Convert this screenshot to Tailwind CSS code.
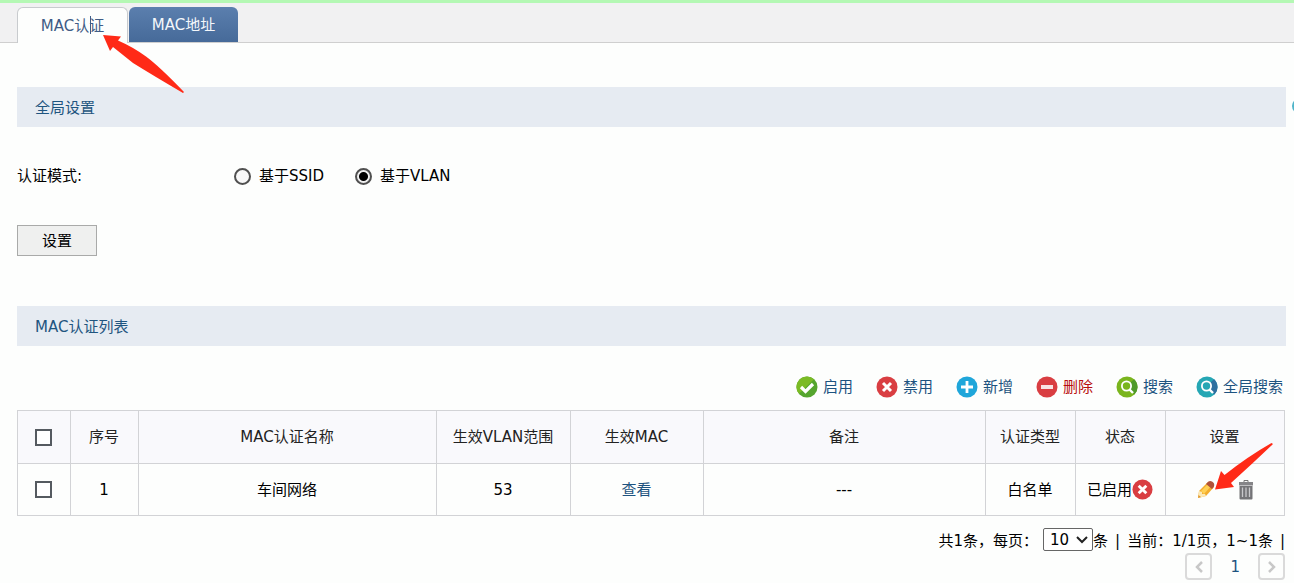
<!DOCTYPE html>
<html lang="zh-CN">
<head>
  <meta charset="UTF-8" />
  <meta name="viewport" content="width=device-width, initial-scale=1.0" />
  <title>MAC认证</title>
  <script src="https://cdn.jsdelivr.net/npm/@tailwindcss/browser@4"></script>
</head>
<body class="relative overflow-x-hidden bg-[#fdfefd] font-['DejaVu_Sans','Noto_Sans_CJK_SC',sans-serif] text-[15px] leading-5 text-black">
  <!-- Tabs -->
  <header class="border-t-3 border-[#b4f8b4]">
    <nav class="flex h-10 items-end gap-px border-b border-[#cfcfcf] bg-[#f1f1f2] pl-[17px]">
      <a href="#auth" class="relative -mb-px flex h-9 w-[111px] items-center justify-center rounded-t-md border border-b-0 border-[#c8cbce] bg-[#fdfefd] text-[#3f5c85]">MAC认证<span class="absolute top-2 left-[72px] h-[18px] w-px bg-[#3f5c85]"></span></a>
      <a href="#address" class="flex h-[35px] w-[109px] items-center justify-center rounded-t-md bg-linear-to-b from-[#5b7fae] to-[#466a99] text-[#f4f7fb]">MAC地址</a>
    </nav>
  </header>

  <main class="pt-11 pr-2 pl-[17px]">
    <!-- Global settings -->
    <h2 class="flex h-10 items-center bg-[#e6ebf2] pt-px pl-[18px] text-[#1f5580]">全局设置</h2>
    <form>
      <fieldset class="mt-[39px] flex items-center">
        <legend class="float-left w-[217px]">认证模式:</legend>
        <label class="flex w-[121px] items-center gap-2">
          <input type="radio" name="mode" class="size-[17px] appearance-none rounded-full border-2 border-[#505050] bg-[#f8f8f8]" />基于SSID
        </label>
        <label class="flex items-center gap-2">
          <input type="radio" name="mode" checked class="size-[17px] appearance-none rounded-full border-2 border-[#505050] bg-[#f8f8f8] checked:bg-[radial-gradient(circle,#000_4px,#f0f0f0_5px)]" />基于VLAN
        </label>
      </fieldset>
      <button type="button" class="mt-[39px] block h-[31px] w-20 border border-[#a9aaa9] bg-[#eff0ef] pt-px">设置</button>
    </form>

    <!-- List -->
    <h2 class="mt-[50px] flex h-10 items-center bg-[#e6ebf2] pt-px pl-[18px] text-[#1f5580]">MAC认证列表</h2>
    <div class="mt-[30px] mr-[3px] flex items-center justify-end gap-[23px] text-[#1d5380]">
      <button type="button" class="flex items-center gap-[5px]">
        <svg class="size-[22px]" viewBox="0 0 22 22"><circle cx="11" cy="11" r="10.5" fill="#55a52e"/><path d="M11 .5a10.500 10.500 0 0 0-8 17.300L18 3.200A10.500 10.500 0 0 0 11 .5" fill="#7bbb25"/><path d="M5 11l4.500 4.500L17 8" fill="none" stroke="#fff" stroke-width="3.200"/></svg>启用
      </button>
      <button type="button" class="flex items-center gap-[5px]">
        <svg class="size-[22px]" viewBox="0 0 22 22"><circle cx="11" cy="11" r="10.500" fill="#d93e42"/><path d="M7 7l8 8M15 7l-8 8" stroke="#fff" stroke-width="3"/></svg>禁用
      </button>
      <button type="button" class="flex items-center gap-[5px]">
        <svg class="size-[22px]" viewBox="0 0 22 22"><circle cx="11" cy="11" r="10.500" fill="#1fa6da"/><path d="M11 5v12M5 11h12" stroke="#fff" stroke-width="2.800"/></svg>新增
      </button>
      <button type="button" class="flex items-center gap-[5px] text-[#b80d0d]">
        <svg class="size-[22px]" viewBox="0 0 22 22"><circle cx="11" cy="11" r="10.500" fill="#d93e42"/><path d="M5 11h12" stroke="#f8e4e4" stroke-width="4"/></svg>删除
      </button>
      <button type="button" class="flex items-center gap-[5px]">
        <svg class="size-[22px]" viewBox="0 0 22 22"><circle cx="11" cy="11" r="10.500" fill="#7ab51d"/><path d="M15 15l3.500 3.500A10.500 10.500 0 0 0 18 3.200L14 7z" fill="#4f9a2a"/><circle cx="10.500" cy="10" r="4.600" fill="none" stroke="#fff" stroke-width="1.800"/><path d="M13.500 13.500l3.500 3.500" stroke="#fff" stroke-width="2.400"/></svg>搜索
      </button>
      <button type="button" class="flex items-center gap-[5px]">
        <svg class="size-[22px]" viewBox="0 0 22 22"><circle cx="11" cy="11" r="10.500" fill="#25a7b4"/><path d="M15 15l3.500 3.500A10.500 10.500 0 0 0 18 3.200L14 7z" fill="#2f6f9f"/><circle cx="10.500" cy="10" r="4.600" fill="none" stroke="#fff" stroke-width="1.800"/><path d="M13.500 13.500l3.500 3.500" stroke="#fff" stroke-width="2.400"/></svg>全局搜索
      </button>
    </div>

    <div class="relative mt-3 mr-px">
      <table class="w-full table-fixed border-collapse text-center [&_td]:border [&_td]:border-[#d2d3d6] [&_td]:pr-px [&_th]:border [&_th]:border-[#d2d3d6] [&_th]:pr-px [&_th]:font-normal">
        <colgroup>
          <col class="w-[53px]" /><col class="w-[68px]" /><col class="w-[298px]" /><col class="w-[134px]" /><col class="w-[133px]" /><col /><col class="w-[90px]" /><col class="w-[90px]" /><col class="w-[119px]" />
        </colgroup>
        <thead class="bg-[#f9f9fc] text-[#222]">
          <tr class="h-[53px]">
            <th><input type="checkbox" aria-label="全选" class="block mx-auto size-[17px] appearance-none border-2 border-[#555a60] bg-white" /></th>
            <th>序号</th>
            <th>MAC认证名称</th>
            <th>生效VLAN范围</th>
            <th>生效MAC</th>
            <th>备注</th>
            <th>认证类型</th>
            <th>状态</th>
            <th>设置</th>
          </tr>
        </thead>
        <tbody>
          <tr class="h-[52px]">
            <td><input type="checkbox" aria-label="选择1" class="block mx-auto size-[17px] appearance-none border-2 border-[#555a60] bg-white" /></td>
            <td>1</td>
            <td>车间网络</td>
            <td>53</td>
            <td><a href="#view" class="text-[#1d5380]">查看</a></td>
            <td>---</td>
            <td>白名单</td>
            <td>
              <div class="flex items-center justify-center">已启用<button type="button" aria-label="禁用"><svg class="block size-[21px]" viewBox="0 0 22 22"><circle cx="11" cy="11" r="10.500" fill="#d93e42"/><path d="M7 7l8 8M15 7l-8 8" stroke="#fff" stroke-width="3"/></svg></button></div>
            </td>
            <td>
              <div class="flex items-center justify-center gap-5 pl-0.5">
                <button type="button" aria-label="编辑"><svg class="block size-5" viewBox="0 0 20 20"><path d="M2 18l1-7 9-9 6 5-8 9z" fill="#f3ad2c"/><path d="M5 11l8-8 3 2-8 9z" fill="#ffd054"/><path d="M2 18l1-7 3 1v2l3 0 1 2z" fill="#fbe9b8"/><path d="M2 18l.500-3 2.500 2z" fill="#e0962a"/><path d="M11 3q2-3 5-1.500t2 5l-2 2.500-6-5z" fill="#b0523a"/></svg></button>
                <button type="button" aria-label="删除"><svg class="block size-5" viewBox="0 0 20 20"><path d="M8 2V.500h4V2" fill="none" stroke="#777" stroke-width="1"/><path d="M3 2h14v3.500H3z" fill="#858588"/><path d="M3.500 6h13v12.500q0 1-1 1h-11q-1 0-1-1z" fill="#747477"/><path d="M6.500 7.500v9.500M10 7.500v9.500M13.500 7.500v9.500" stroke="#c9c9cc" stroke-width="1.300"/></svg></button>
              </div>
            </td>
          </tr>
        </tbody>
      </table>
      <!-- pointer to the edit button -->
      <svg class="pointer-events-none absolute right-[11px] bottom-[24px] h-[50px] w-[60px]" viewBox="0 0 60 50"><path d="M1 47.500L7 29l3.500 4Q33 15 57.500 1l1.500 1Q38 22 17 41l3 4z" fill="#ff2a17"/></svg>
    </div>

    <!-- Pager -->
    <div class="mt-3 mr-px flex items-center justify-end">
      <label for="pageSize" class="mr-[5px] pt-0.5">共1条，每页：</label>
      <div class="relative">
        <select id="pageSize" class="block h-[23px] w-[50px] appearance-none rounded-xs border border-[#666] bg-white pl-1.5">
          <option>10</option>
          <option>20</option>
          <option>50</option>
        </select>
        <svg class="pointer-events-none absolute top-2 right-[5px] h-2 w-3" viewBox="0 0 12 8"><path d="M1 1l5 5 5-5" fill="none" stroke="#222" stroke-width="2"/></svg>
      </div>
      <div class="flex gap-[7px] pt-0.5"><span>条</span><span>|</span><span>当前：1/1页，1~1条</span><span>|</span></div>
    </div>
    <div class="mt-0.5 mr-px flex items-center justify-end gap-[18px]">
      <button type="button" aria-label="上一页" class="flex size-[27px] items-center justify-center rounded-sm border-2 border-[#dadada]"><svg class="h-3 w-2" viewBox="0 0 8 12"><path d="M7 1L2 6l5 5" fill="none" stroke="#c8c8c8" stroke-width="2.500"/></svg></button>
      <a href="#page1" class="text-[#1d5380]">1</a>
      <button type="button" aria-label="下一页" class="flex size-[27px] items-center justify-center rounded-sm border-2 border-[#dadada]"><svg class="h-3 w-2" viewBox="0 0 8 12"><path d="M1 1l5 5-5 5" fill="none" stroke="#c8c8c8" stroke-width="2.500"/></svg></button>
    </div>
  </main>

  <!-- pointer to the active tab -->
  <svg class="pointer-events-none absolute top-[34px] left-[102px] h-[60px] w-[84px]" viewBox="0 0 84 60"><path d="M1 1l18 1.500-3 4Q31 13 44 22.500T82 58l-1 1Q52 42 31 29L11 13l-3 4z" fill="#ff2a17"/></svg>
  <!-- help bubble, mostly off the right edge -->
  <span class="absolute top-[98px] -right-[14px] size-4 rounded-full bg-[#4fb4c9]"></span>
</body>
</html>
